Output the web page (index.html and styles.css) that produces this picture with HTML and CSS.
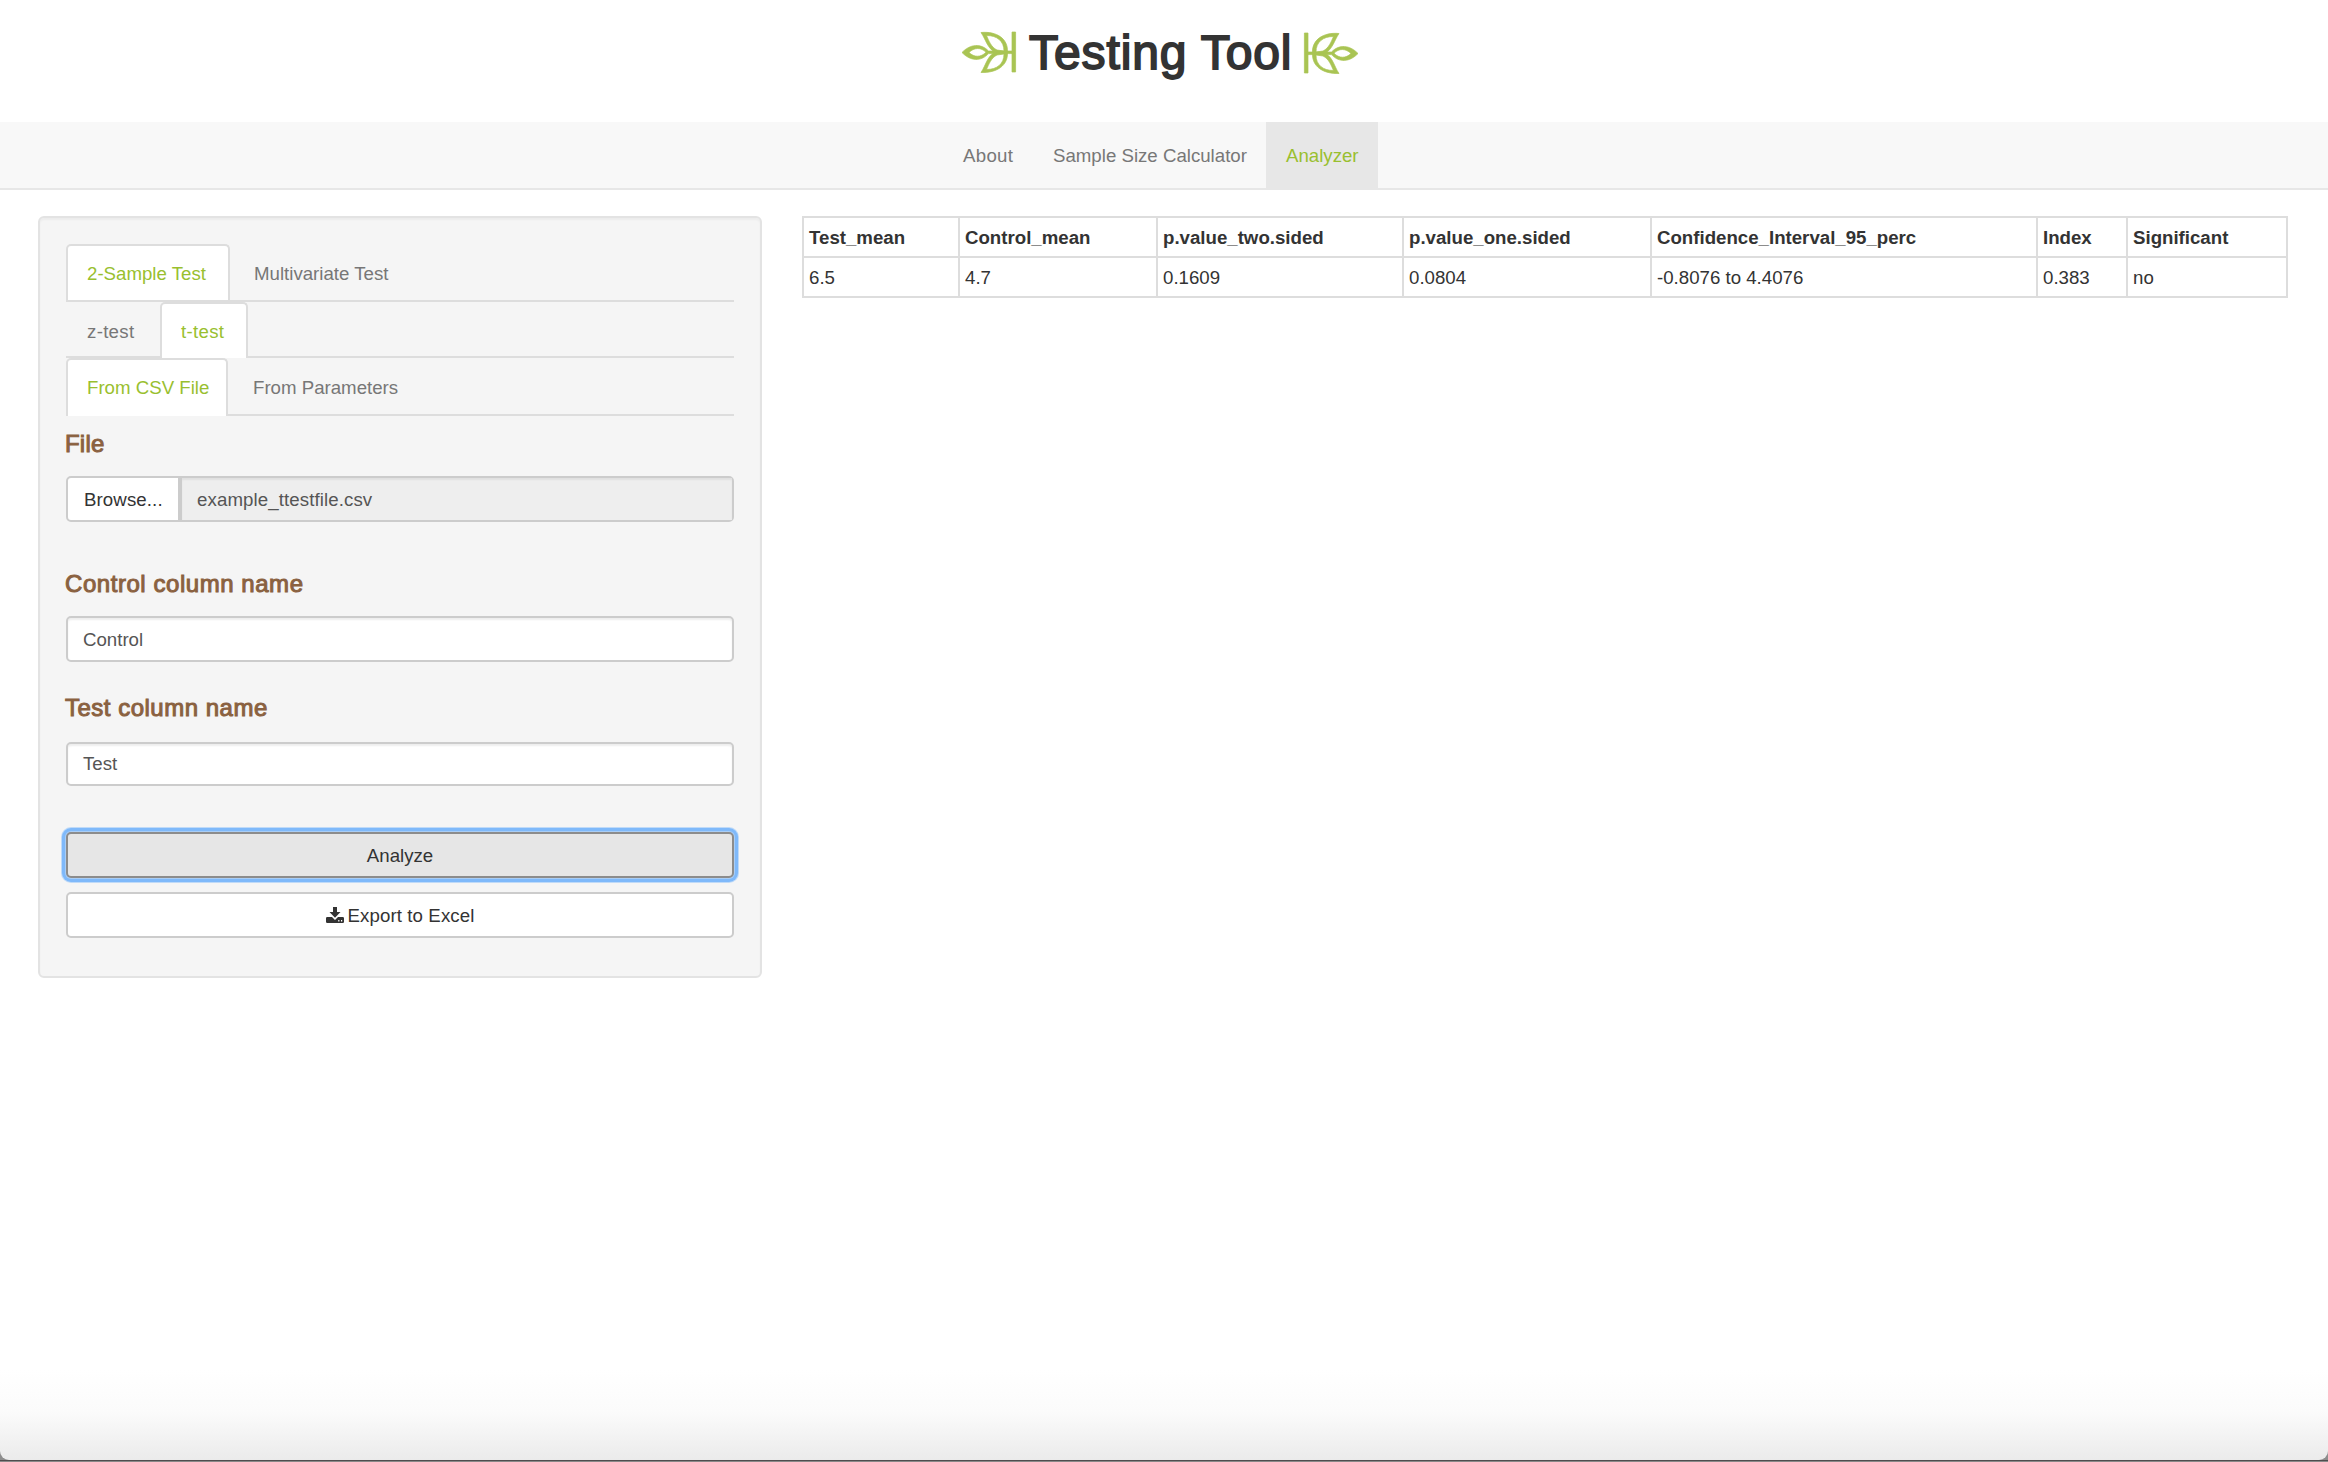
FILE: index.html
```html
<!DOCTYPE html>
<html lang="en">
<head>
<meta charset="utf-8">
<title>Testing Tool</title>
<link rel="stylesheet" href="styles.css">
</head>
<body>
<div class="window">
  <header class="header">
    <svg class="leaf leaf-left" viewBox="0 0 54 42" aria-hidden="true">
      <path class="bar" d="M50 0h3.600v40H50z"/>
      <path d="M0 20.500C8 12 19 11 26.500 19H50v2.600H26.500C19 30 8 29 0 20.500zM7 20.500C12 25.500 19 25.500 24 20.300C19 15 12 15.500 7 20.500z" fill-rule="evenodd"/>
      <path d="M19 .5C35 -1 46 7 45.500 19.500L32 19.800C25 15 24 8 19 .5zM24.500 3.500C27 9 29 15 35 18L42 19C42 9 35 3.500 24.500 3.500z" fill-rule="evenodd"/>
      <path d="M19 40.500C35 41 46 33.500 45.500 20.500L32 20.800C25 25 24 33 19 40.500zM24.500 37.500C27 32 29 26 35 23L42 22C42 32 35 37.500 24.500 37.500z" fill-rule="evenodd"/>
    </svg>
    <h1 class="title">Testing Tool</h1>
    <svg class="leaf leaf-right" viewBox="0 0 54 42" aria-hidden="true">
      <path class="bar" d="M50 0h3.600v40H50z"/>
      <path d="M0 20.500C8 12 19 11 26.500 19H50v2.600H26.500C19 30 8 29 0 20.500zM7 20.500C12 25.500 19 25.500 24 20.300C19 15 12 15.500 7 20.500z" fill-rule="evenodd"/>
      <path d="M19 .5C35 -1 46 7 45.500 19.500L32 19.800C25 15 24 8 19 .5zM24.500 3.500C27 9 29 15 35 18L42 19C42 9 35 3.500 24.500 3.500z" fill-rule="evenodd"/>
      <path d="M19 40.500C35 41 46 33.500 45.500 20.500L32 20.800C25 25 24 33 19 40.500zM24.500 37.500C27 32 29 26 35 23L42 22C42 32 35 37.500 24.500 37.500z" fill-rule="evenodd"/>
    </svg>
  </header>
  <nav class="navbar">
    <a class="nav-item nav-about">About</a>
    <a class="nav-item nav-calc">Sample Size Calculator</a>
    <a class="nav-item nav-analyzer active">Analyzer</a>
  </nav>
  <main class="main">
    <section class="well">
      <div class="tabs tabs-kind">
        <a class="tab active">2-Sample Test</a>
        <a class="tab">Multivariate Test</a>
      </div>
      <div class="tabs tabs-test">
        <a class="tab">z-test</a>
        <a class="tab active">t-test</a>
      </div>
      <div class="tabs tabs-source">
        <a class="tab active">From CSV File</a>
        <a class="tab">From Parameters</a>
      </div>
      <h4 class="label label-file">File</h4>
      <div class="file-group">
        <span class="browse">Browse...</span>
        <span class="filename">example_ttestfile.csv</span>
      </div>
      <h4 class="label label-control">Control column name</h4>
      <div class="field">Control</div>
      <h4 class="label label-test">Test column name</h4>
      <div class="field field-test">Test</div>
      <button class="btn btn-analyze">Analyze</button>
      <button class="btn btn-export">
        <svg class="download" viewBox="0 0 18 16" aria-hidden="true">
          <path fill-rule="evenodd" d="M7 0h4v5h3.500L9 10.700L3.500 5H7zM1.200 10H6l3 3l3-3h4.800Q18 10 18 11.200V14.800Q18 16 16.800 16H1.200Q0 16 0 14.800V11.200Q0 10 1.200 10zM12.200 13v1.400h1.200V13zM15 13v1.400h1.200V13z"/>
        </svg>
        <span>Export to Excel</span>
      </button>
    </section>
    <table class="results">
      <colgroup><col class="c1"><col class="c2"><col class="c3"><col class="c4"><col class="c5"><col class="c6"><col class="c7"></colgroup>
      <thead>
        <tr><th>Test_mean</th><th>Control_mean</th><th>p.value_two.sided</th><th>p.value_one.sided</th><th>Confidence_Interval_95_perc</th><th>Index</th><th>Significant</th></tr>
      </thead>
      <tbody>
        <tr><td>6.5</td><td>4.7</td><td>0.1609</td><td>0.0804</td><td>-0.8076 to 4.4076</td><td>0.383</td><td>no</td></tr>
      </tbody>
    </table>
  </main>
</div>
</body>
</html>
```
FILE: styles.css
```css
* { box-sizing: border-box; }

body {
  margin: 0;
  height: 1462px;
  overflow: hidden;
  background: linear-gradient(#8d8d8d 0 1460px, #4f4d4e 1460px 1461px, #8a8888 1461px);
  font-family: "Liberation Sans", Arial, sans-serif;
  font-size: 18.67px;
  line-height: 26px;
  color: #333;
}

.window {
  height: 1460px;
  border-radius: 0 0 9px 9px;
  background: linear-gradient(#fff 1370px, #fbfbfb 1412px, #ebebeb 1460px);
}

.header {
  display: flex;
  align-items: flex-start;
  height: 122px;
  padding: 33px 0 0 962px;
}

.leaf {
  width: 54px;
  height: 42px;
  fill: #a9c453;
  stroke: #a9c453;
  stroke-width: .7px;
  overflow: visible;
}
.leaf-left { margin-top: -1px; }
.leaf-right { transform: scaleX(-1); margin-left: 14px; }

.title {
  width: 261px;
  margin: -8px 0 0 13px;
  font-size: 48px;
  font-weight: 400;
  line-height: 56px;
  letter-spacing: .9px;
  -webkit-text-stroke: 1.8px #333;
  white-space: nowrap;
}

.navbar {
  display: flex;
  height: 68px;
  padding-left: 942px;
  background: #f8f8f8;
  border-bottom: 2px solid #e7e7e7;
  color: #777;
}
.nav-item { padding: 21px 0 0 21px; white-space: nowrap; }
.nav-about { width: 90px; letter-spacing: .3px; }
.nav-calc { width: 234px; }
.nav-analyzer { width: 112px; padding-left: 20px; }
.nav-item.active { background: #e7e7e7; color: #99bf2f; }

.main { display: flex; align-items: flex-start; padding: 26px 0 0 38px; }

.well {
  width: 724px;
  height: 762px;
  margin-right: 40px;
  padding: 26px;
  border: 2px solid #e3e3e3;
  border-radius: 6px;
  background: #f5f5f5;
  box-shadow: inset 0 2px 2px rgba(0, 0, 0, .04);
}

.tabs { display: flex; border-bottom: 2px solid #ddd; color: #777; }
.tab {
  padding: 15px 18px 0 19px;
  margin-right: 4px;
  border: 2px solid transparent;
  border-bottom: 0;
  white-space: nowrap;
}
.tab.active {
  border-color: #ddd;
  border-radius: 5px 5px 0 0;
  background: #fff;
  color: #99bf2f;
}
.tabs-kind { height: 58px; }
.tabs-kind .active { width: 164px; }
.tabs-kind .tab:last-child { padding-left: 18px; }
.tabs-test { height: 56px; letter-spacing: .3px; }
.tabs-test .tab:first-child { width: 90px; }
.tabs-test .active { width: 88px; margin-bottom: -2px; }
.tabs-source { height: 58px; }
.tabs-source .active { width: 162px; margin-bottom: -2px; }

.label {
  margin: 0 0 0 -1px;
  font-size: 24px;
  font-weight: 400;
  line-height: 28px;
  letter-spacing: .55px;
  color: #8a6140;
  -webkit-text-stroke: 1px #8a6140;
  white-space: nowrap;
}
.label-file { margin-top: 14px; letter-spacing: .2px; }
.label-control { margin-top: 48px; }
.label-test { margin-top: 32px; letter-spacing: .5px; }

.file-group, .field {
  display: flex;
  height: 46px;
  margin-top: 18px;
  border: 2px solid #ccc;
  border-radius: 5px;
  background: #fff;
  color: #555;
  line-height: 43px;
}
.browse { width: 114px; padding-left: 16px; border-right: 4px solid #ccc; color: #333; letter-spacing: .1px; }
.filename { flex: 1; padding-left: 15px; background: #eee; box-shadow: inset 0 2px 2px rgba(0, 0, 0, .06); letter-spacing: .1px; }
.field { padding-left: 15px; box-shadow: inset 0 2px 2px rgba(0, 0, 0, .07); }
.field-test { height: 44px; margin-top: 20px; line-height: 40px; }

.btn {
  display: flex;
  justify-content: center;
  align-items: center;
  gap: 4px;
  width: 100%;
  height: 46px;
  padding: 1px 0 0;
  border: 2px solid #ccc;
  border-radius: 5px;
  background: #fff;
  font: inherit;
  color: #333;
}
.btn-analyze {
  margin-top: 46px;
  border-color: #8c8c8c;
  background: #e6e6e6;
  box-shadow: 0 0 0 1px #a9cdf5, 0 0 0 4px #7fb9fa, 0 0 0 5px #bfdaf8;
}
.btn-export { margin-top: 14px; letter-spacing: .1px; }
.download { width: 18px; height: 16px; margin-top: -1px; fill: #333; }

.results {
  width: 1486px;
  table-layout: fixed;
  border-collapse: collapse;
}
.results th, .results td {
  height: 40px;
  padding: 1px 0 0 5px;
  border: 2px solid #ddd;
  text-align: left;
  line-height: 37px;
  white-space: nowrap;
}
.c1 { width: 156px; }
.c2 { width: 198px; }
.c3 { width: 246px; }
.c4 { width: 248px; }
.c5 { width: 386px; }
.c6 { width: 90px; }
.c7 { width: 160px; }
```
